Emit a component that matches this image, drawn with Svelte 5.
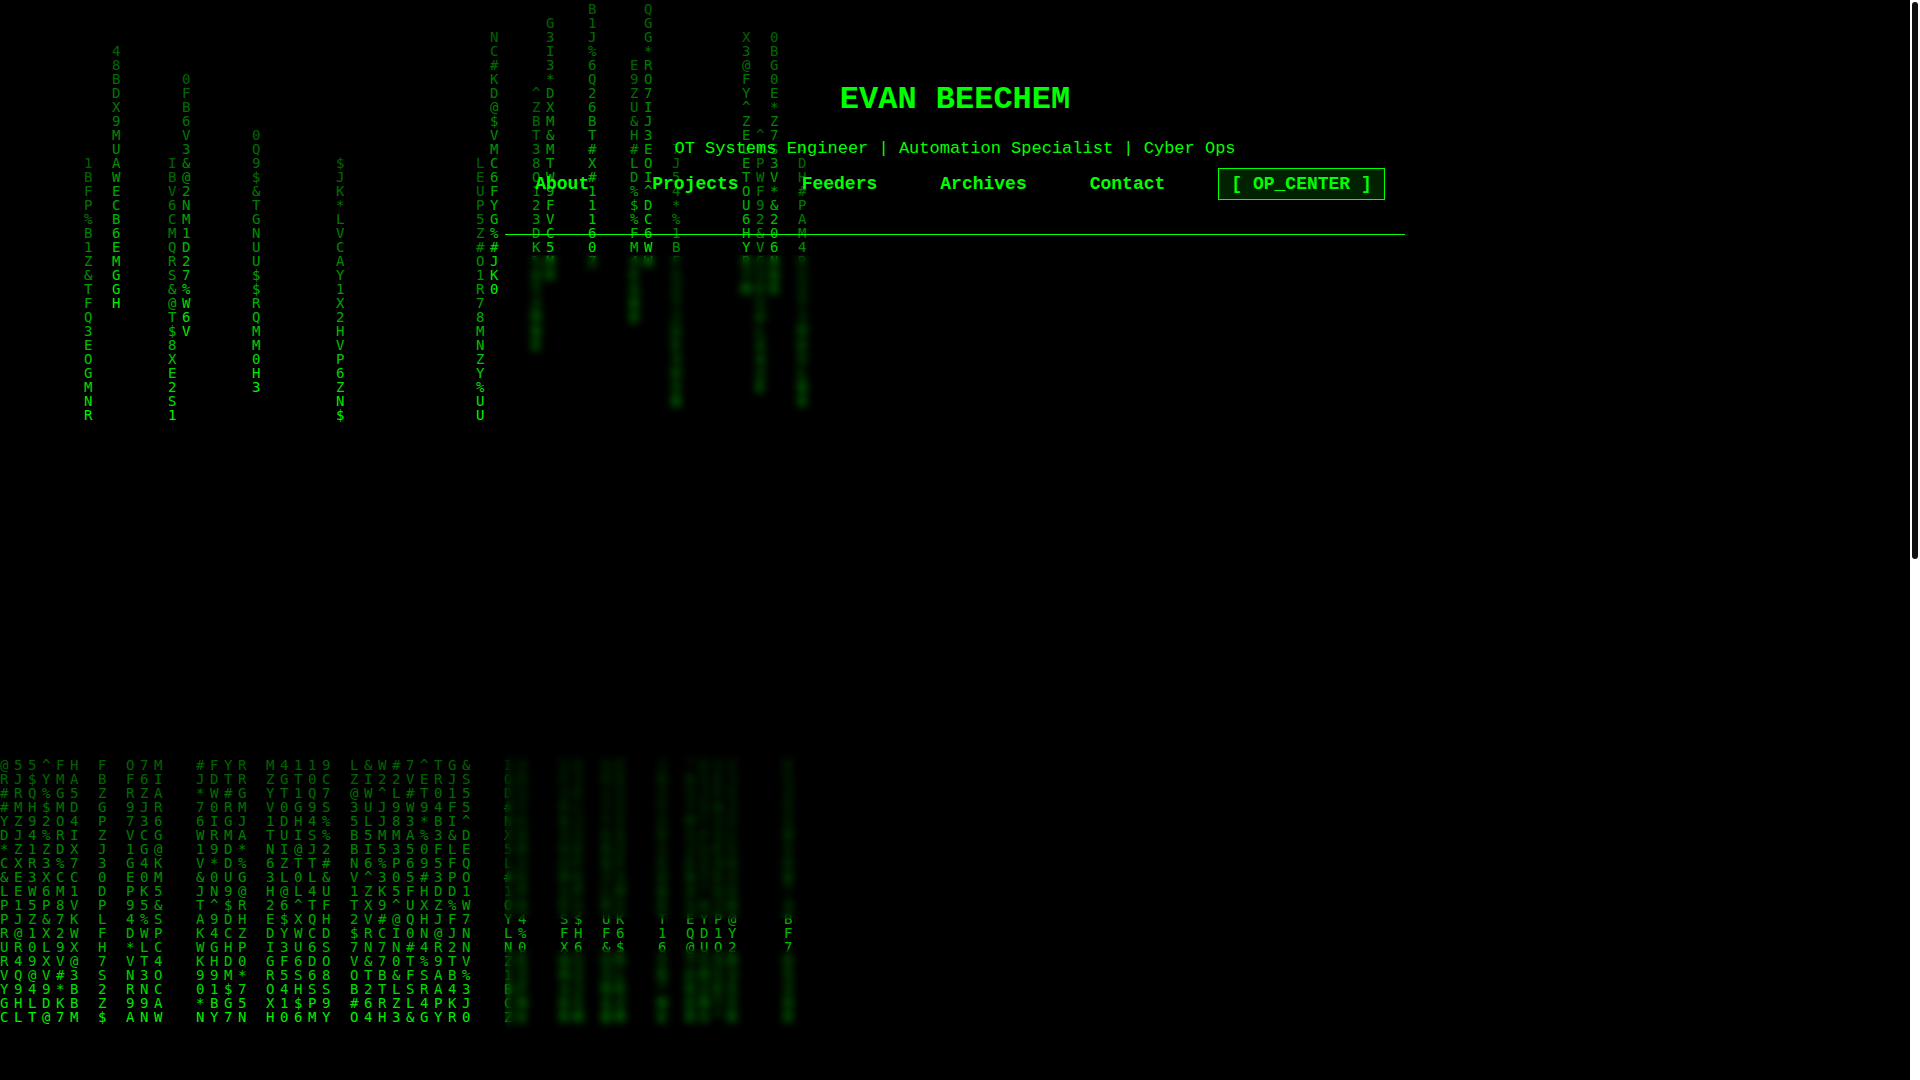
<script lang="ts">
	interface Stream {
		col: number;
		row: number;
		chars: string;
	}

	const links = [
		{ label: 'About', href: '#about' },
		{ label: 'Projects', href: '#projects' },
		{ label: 'Feeders', href: '#feeders' },
		{ label: 'Archives', href: '#archives' },
		{ label: 'Contact', href: '#contact' }
	];

	// falling columns, row is the grid line of the oldest glyph
	const falling: Stream[] = [
		{ col: 7, row: 12, chars: '1BFP%B1Z&TFQ3EOGMNR' },
		{ col: 9, row: 4, chars: '48BDX9MUAWECB6EMGGH' },
		{ col: 13, row: 12, chars: 'IBV6CMQRS&@T$8XE2S1' },
		{ col: 14, row: 6, chars: '0FB6V3&@2NM1D27%W6V' },
		{ col: 19, row: 10, chars: '0Q9$&TGNUU$$RQMM0H3' },
		{ col: 25, row: 12, chars: '$JK*LVCAY1X2HVP6ZN$' },
		{ col: 35, row: 12, chars: 'LEUP5Z#O1R78MNZY%UU' },
		{ col: 36, row: 3, chars: 'NC#KD@$VMC6FYG%#JK0' },
		{ col: 39, row: 7, chars: '^ZBT38O123DK%8T2MBE' },
		{ col: 40, row: 2, chars: 'G3I3*DXM&MTW9FVC5MR' },
		{ col: 43, row: 1, chars: 'B1J%6Q26BT#X#11160Z' },
		{ col: 46, row: 5, chars: 'E9ZU&H#LD%$%FM4EABD' },
		{ col: 47, row: 1, chars: 'QGG*RO7IJ3EOI^DC6WW' },
		{ col: 49, row: 11, chars: '7J54*%1BFSZ7JDE3H5B' },
		{ col: 54, row: 3, chars: 'X3@FY^ZEUETOU6HYR7M' },
		{ col: 55, row: 10, chars: '^#PWF92&VG5RSHLA4ZE' },
		{ col: 56, row: 3, chars: '0BG0E*Z7S3V*&206NBR' },
		{ col: 58, row: 11, chars: '4DH#PAM4RSZ7JMD5LB6' }
	];

	const settledRow = 55;

	const settled = [
		'@55^FH F O7M  #FYR M4119 L&W#7^TG&  I4  SE UE  1 ^ESI   E',
		'RJ$YMA B F6I  JDTR ZGT0C ZI22VERJS  QR  FZ RD  B BIEJ   S',
		'#RQ%G5 Z RZA  *W#G YT1Q7 @W^L#T015  D5  ZE JZ  Z SJFI   Z',
		'#MH$MD G 9JR  70RM V0G9S 3UJ9W94F5  #T  RL 7I  F 75BJ   5',
		'YZ92O4 P 736  6IGJ 1DH4% 5LJ83*BI^  NE  BJ TZ  X M*3I   X',
		'DJ4%RI Z VCG  WRMA TUIS% B5MMA%3&D  XH  3Z E$  R SF2L   M',
		'*Z1ZDX J 1G@  19D* NI@J2 BI5350FLE  5M  HE BZ  I JSES   5',
		'CXR3%7 3 G4K  V*D% 6ZTT# N6%P695FQ  LS  UF 8F  E EI4H   D',
		'&E3XCC 0 E0M  &0UG 3L0L& V^305#3PO  #E  ME Z3  H B7EZ   W',
		'LEW6M1 D PK5  JN9@ H@L4U 1ZK5FHDD1  1P  SP LM  B 4^UA   ^',
		'P15P8V P 95&  T^$R 26^TF TX9^UXZ%W  O8  ES RS  E SHJW   3',
		'PJZ&7K L 4%S  A9DH E$XQH 2V#@QHJF7  Y4  S$ UK  T EYP@   B',
		'R@1X2W F DWP  K4CZ DYWCD $RCI0N@JN  L%  FH F6  1 QD1Y   F',
		'UR0L9X H *LC  WGHP I3U6S 7N7N#4R2N  N0  X6 &$  6 @UO2   7',
		'R49XV@ 7 VT4  KHD0 GF6DO V&70T%9TV  ZE  NS UR  I 7S5M   D',
		'VQ@V#3 S N3O  99M* R5S68 OTB&FSAB%  1Z  MZ ZL  R EMI3   5',
		'Y949*B 2 RNC  01$7 O4HSS B2TLSRA43  BF  3J MR  ^ RZE5   Z',
		'GHLDKB Z 99A  *BG5 X1$P9 #6RZL4PKJ  CM  DI $Z  M EM*I   H',
		'CLT@7M $ ANW  NY7N H06MY O4H3&GYR0  ZE  RM BM  E R5^R   R'
	];

	const columns: Stream[] = Array.from({ length: settled[0].length }, (_, i) => ({
		col: i + 1,
		row: settledRow,
		chars: settled.map((line) => line[i]).join('')
	})).filter((stream) => stream.chars.trim());

	const streams = [...falling, ...columns];

	function fade(i: number, length: number) {
		return Math.pow(0.95, length - i).toFixed(3);
	}
</script>

<div class="window">
	<div class="page">
		<div class="rain" aria-hidden="true">
			{#each streams as stream}
				<div class="stream" style="grid-area: {stream.row} / {stream.col} / span 19;">
					{#each stream.chars as char, i}
						<span style="opacity: {fade(i, stream.chars.length)}">{char}</span>
					{/each}
				</div>
			{/each}
		</div>

		<div class="content">
			<header>
				<h1>EVAN BEECHEM</h1>
				<p>OT Systems Engineer | Automation Specialist | Cyber Ops</p>
				<nav>
					{#each links as link}
						<a href={link.href}>{link.label}</a>
					{/each}
					<a class="op-center" href="#op-center">[ OP_CENTER ]</a>
				</nav>
			</header>
			<main>
				<section class="panel intro"></section>
				<section class="panel"></section>
			</main>
		</div>
	</div>
	<div class="scroll-track">
		<div class="scroll-thumb"></div>
	</div>
</div>

<style>
	:global(body) {
		background: #000;
		overflow: hidden;
	}

	.window {
		display: flex;
		height: 100vh;
		background: #000;
		color: #0f0;
		font-family: 'Liberation Mono', 'Courier New', monospace;
	}

	.page {
		position: relative;
		flex: 1;
		min-width: 0;
		overflow: hidden;
	}

	.rain {
		position: absolute;
		inset: 0;
		display: grid;
		grid-template-columns: repeat(58, 14px);
		grid-auto-rows: 14px;
		padding-top: 2px;
		font: 14px/14px 'DejaVu Sans Mono', monospace;
	}

	.stream {
		display: flex;
		flex-direction: column;
	}

	.stream span {
		height: 14px;
		white-space: pre;
	}

	.content {
		position: relative;
		display: flex;
		flex-direction: column;
		box-sizing: border-box;
		width: 100%;
		max-width: 940px;
		height: 100%;
		margin: 0 auto;
		padding: 0 20px;
	}

	header {
		padding: 81px 0 34px;
		border-bottom: 1px solid #0f0;
		text-align: center;
	}

	h1 {
		margin: 0 0 19px;
		font-size: 32px;
		line-height: 38px;
	}

	p {
		margin: 0 0 8px;
		font-size: 17px;
		line-height: 22px;
	}

	nav {
		display: flex;
		justify-content: center;
		align-items: center;
		gap: 13px;
	}

	nav a {
		margin: 0 25px;
		color: #0f0;
		font-size: 18px;
		font-weight: bold;
		line-height: 20px;
		text-decoration: none;
	}

	nav .op-center {
		margin: 0 15px;
		padding: 5px 12px;
		border: 1px solid #0f0;
		background: #002200;
	}

	main {
		display: flex;
		flex: 1;
		flex-direction: column;
		gap: 30px;
		padding-top: 20px;
	}

	.panel {
		flex: 1;
		background: rgba(0, 0, 0, 0.1);
		backdrop-filter: blur(4px);
	}

	.intro {
		flex: none;
		min-height: 664px;
	}

	.scroll-track {
		box-sizing: border-box;
		width: 10px;
		padding: 2px;
		background: #fff;
	}

	.scroll-thumb {
		height: 51.8%;
		border-radius: 3px;
		background: #111;
	}
</style>
